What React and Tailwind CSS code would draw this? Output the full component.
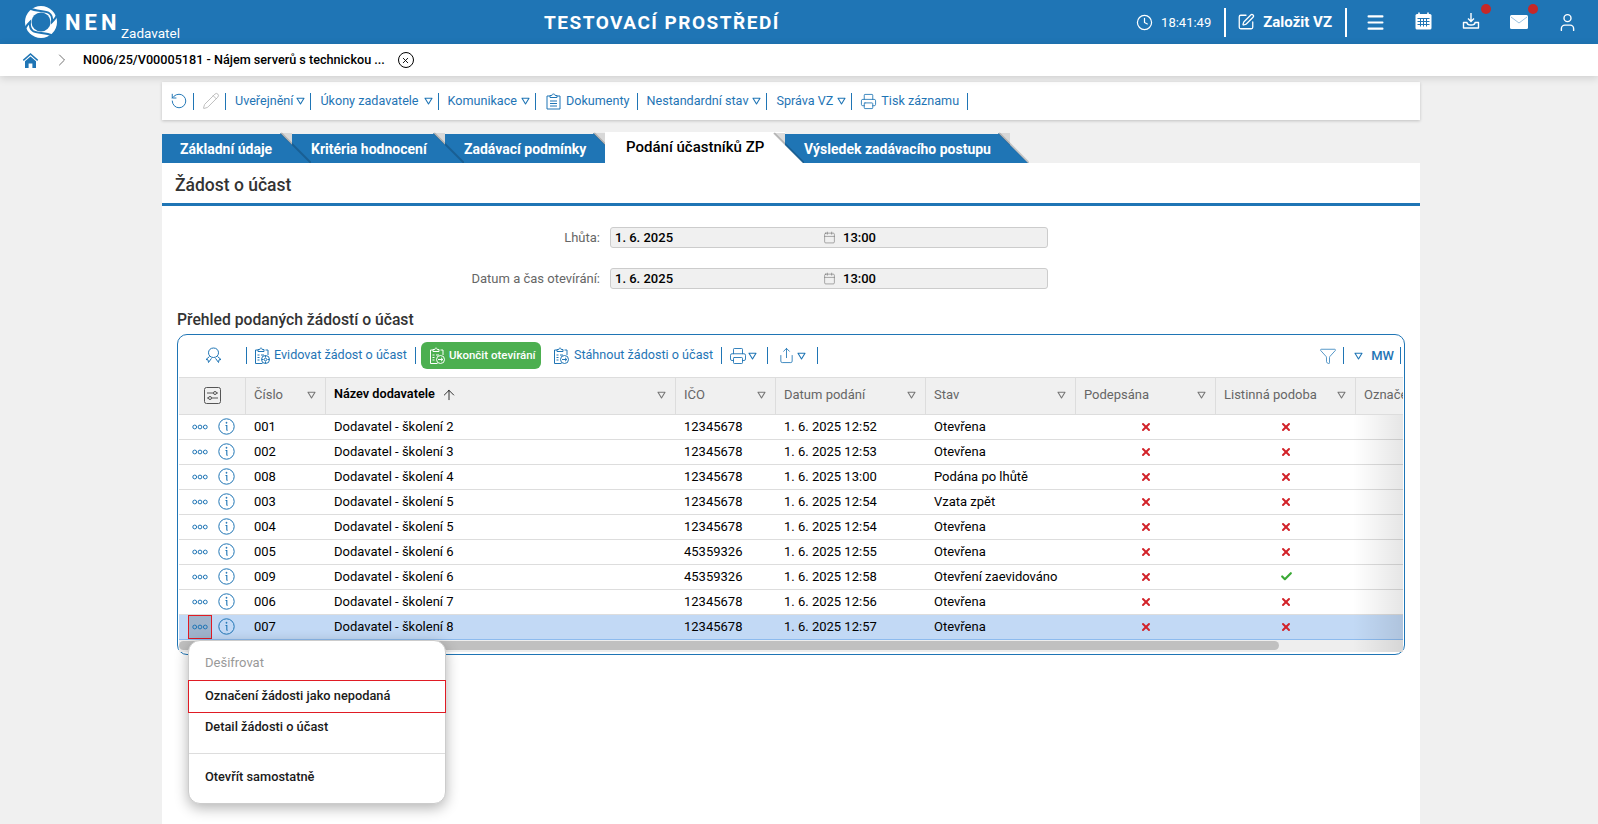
import {
  Clock,
  SquarePen,
  Menu,
  Calendar,
  User,
  ChevronRight,
  RotateCcw,
  Pencil,
  Printer,
  Share,
  Funnel,
  ArrowUp,
  X,
  Check,
} from "lucide-react";

const rows = [
  ["001", "Dodavatel - školení 2", "12345678", "1. 6. 2025 12:52", "Otevřena", false],
  ["002", "Dodavatel - školení 3", "12345678", "1. 6. 2025 12:53", "Otevřena", false],
  ["008", "Dodavatel - školení 4", "12345678", "1. 6. 2025 13:00", "Podána po lhůtě", false],
  ["003", "Dodavatel - školení 5", "12345678", "1. 6. 2025 12:54", "Vzata zpět", false],
  ["004", "Dodavatel - školení 5", "12345678", "1. 6. 2025 12:54", "Otevřena", false],
  ["005", "Dodavatel - školení 6", "45359326", "1. 6. 2025 12:55", "Otevřena", false],
  ["009", "Dodavatel - školení 6", "45359326", "1. 6. 2025 12:58", "Otevření zaevidováno", true],
  ["006", "Dodavatel - školení 7", "12345678", "1. 6. 2025 12:56", "Otevřena", false],
  ["007", "Dodavatel - školení 8", "12345678", "1. 6. 2025 12:57", "Otevřena", false],
];

const tabs = [
  { label: "Základní údaje", box: "w-[130px] pl-[18px] z-[5]" },
  { label: "Kritéria hodnocení", box: "w-[153px] pl-[19px] z-[4]" },
  { label: "Zadávací podmínky", box: "w-[160px] pl-[19px] z-[3]" },
  { label: "Podání účastníků ZP", box: "w-[180px] pl-[21px] z-[6]", active: true },
  { label: "Výsledek zadávacího postupu", box: "w-[225px] pl-[19px] z-[1]" },
];

const gridCols = "grid grid-cols-[67px_80px_350px_100px_150px_150px_140px_140px_60px]";

function Caret({ className = "text-[#1f75b5]" }) {
  return (
    <svg width="9" height="8" viewBox="0 0 9 8" className={`shrink-0 ${className}`}>
      <path d="M1 1.2h7L4.5 7z" fill="none" stroke="currentColor" strokeWidth="1.1" strokeLinejoin="round" />
    </svg>
  );
}

function Sep() {
  return <span className="w-px h-[17px] bg-[#1f75b5] shrink-0" />;
}

function Logo() {
  return (
    <svg width="34" height="34" viewBox="0 0 34 34" className="shrink-0">
      <circle cx="17" cy="17" r="16" fill="#fff" />
      <circle cx="17" cy="17" r="9.5" fill="#1f75b5" />
      <path d="M6 3.5C12 6.5 21 5.500 25 8c3 2 3.500 5 3 9 3-3 5-5 5-8" fill="none" stroke="#1f75b5" strokeWidth="2" />
      <path d="M28 30.500C22 27.500 13 28.500 9 26c-3-2-3.500-5-3-9-3 3-5 5-5 8" fill="none" stroke="#1f75b5" strokeWidth="2" />
    </svg>
  );
}

function HomeIcon() {
  return (
    <svg width="17" height="17" viewBox="0 0 17 17">
      <path d="M8.500 1L0.800 7.800l1 1.100 6.700-5.900 6.700 5.900 1-1.100z" fill="#1f75b5" />
      <path d="M3 9.300l5.500-4.800 5.500 4.800V16h-3.600v-4.500H6.600V16H3z" fill="#1f75b5" />
    </svg>
  );
}

function CalendarIcon() {
  return (
    <svg width="17" height="18" viewBox="0 0 17 18">
      <rect x="0.500" y="2" width="16" height="15.500" rx="1.500" fill="#fff" />
      <path d="M4 0.500v3M13 0.500v3" stroke="#fff" strokeWidth="1.600" />
      <path d="M2.500 6.500h12M2.500 9.500h12M2.500 12.500h12M5.500 6.500v8M8.500 6.500v8M11.500 6.500v8" stroke="#1f75b5" strokeWidth="1" />
    </svg>
  );
}

function InboxIcon() {
  return (
    <svg width="18" height="18" viewBox="0 0 18 18" fill="none" stroke="#fff" strokeWidth="1.400">
      <path d="M9 1v8M6 6.500L9 9.500l3-3" />
      <path d="M1.500 10.500H5c0 1.500 1.500 2.500 4 2.500s4-1 4-2.500h3.500v5.500h-15z" strokeLinejoin="round" />
    </svg>
  );
}

function MailFilled() {
  return (
    <svg width="18" height="14" viewBox="0 0 18 14">
      <rect width="18" height="14" rx="1.500" fill="#fff" />
      <path d="M1 2l8 6 8-6" fill="none" stroke="#9cc3e0" strokeWidth="1" />
    </svg>
  );
}

function ClipIcon({ badge, stroke = "#1f75b5", badgeFill = "#fff" }) {
  return (
    <svg width="18" height="18" viewBox="0 0 18 18" fill="none" stroke={stroke} strokeWidth="1" className="shrink-0">
      <path d="M5 3H2.500v13.500h7M12.500 3H15v5" />
      <path d="M5 4.500V2.500h1.800c.2-1 .6-1.500 1.200-1.500s1 .5 1.200 1.500H11v2z" />
      <path d="M4.500 8h2M4.500 10.500h2M4.500 13h2M8 8h3" />
      <circle cx="12.500" cy="12.500" r="4" fill={badgeFill} />
      {badge === "gear" ? (
        <>
          <circle cx="12.500" cy="12.500" r="1.300" />
          <path d="M12.500 8.500v2M12.500 14.500v2M8.500 12.500h2M14.500 12.500h2" />
        </>
      ) : (
        <path d="M10 12.500h4.800M13 10.800l1.800 1.700-1.800 1.700" />
      )}
    </svg>
  );
}

function DocIcon() {
  return (
    <svg width="15" height="17" viewBox="0 0 15 17" fill="none" stroke="#1f75b5" strokeWidth="1" className="shrink-0">
      <path d="M4 3H1v13h13V3h-3" />
      <path d="M4 4.500V2.500h1.800C6 1.400 6.600 1 7.500 1s1.500.4 1.700 1.500H11v2z" />
      <path d="M4 8h7M4 10.500h7M4 13h7" />
    </svg>
  );
}

function AwardIcon() {
  return (
    <svg width="17" height="17" viewBox="0 0 17 17" fill="none" stroke="#1f75b5" strokeWidth="1" className="shrink-0">
      <path d="M8.500 1C5.500 1 3.500 3 3.500 5.800c0 2.600 2 4.700 5 4.700s5-2.100 5-4.700C13.500 3 11.500 1 8.500 1z" />
      <path d="M4.500 9.500L1 12.500l2 .3.500 2.700 3-4.200M12.500 9.500L16 12.500l-2 .3-.500 2.700-3-4.200" />
    </svg>
  );
}

function ColumnsIcon() {
  return (
    <svg width="17" height="17" viewBox="0 0 17 17" fill="none" stroke="#555" strokeWidth="1">
      <rect x="0.500" y="0.500" width="16" height="16" rx="2" />
      <path d="M3 6h6.500M12.500 6H14M3 11h1.500M7.500 11H14" />
      <circle cx="11" cy="6" r="1.500" />
      <circle cx="6" cy="11" r="1.500" />
    </svg>
  );
}

function Dots() {
  return (
    <svg width="16" height="6" viewBox="0 0 16 6" fill="none" stroke="#1f75b5" strokeWidth="1" className="shrink-0">
      <circle cx="2.700" cy="3" r="1.900" />
      <circle cx="8" cy="3" r="1.900" />
      <circle cx="13.300" cy="3" r="1.900" />
    </svg>
  );
}

function InfoIcon() {
  return (
    <svg width="17" height="17" viewBox="0 0 17 17" fill="none" stroke="#1f75b5" className="shrink-0">
      <circle cx="8.500" cy="8.500" r="7.700" strokeWidth="1" />
      <path d="M7.500 7.500h1.300v4.200c0 .5.300.7.900.6" strokeWidth="1.100" />
      <circle cx="8.500" cy="4.800" r=".7" fill="#1f75b5" strokeWidth=".4" />
    </svg>
  );
}

function CrossMark() {
  return <X size={12} strokeWidth={4} className="text-[#d2232a]" />;
}

function TabTail({ active }) {
  return (
    <svg width="31" height="31" viewBox="0 0 31 31" className="absolute right-[-19px] bottom-0">
      <path d="M0 1h12v12z" fill={active ? "#dcdcdc" : "#d8d8d8"} />
      <path d="M0 1l30 30H0z" fill={active ? "#fff" : "#1f75b5"} />
      <path d="M1 1l30 30" stroke="#000" strokeOpacity=".18" strokeWidth="2" />
    </svg>
  );
}

function Field({ label }) {
  return (
    <div className="flex items-center">
      <span className="w-[440px] pr-[10px] text-right text-[13px] text-[#666]">{label}</span>
      <div className="flex items-center w-[438px] h-[21px] bg-[#f0f0f0] border border-[#ccc] rounded-[3px] pl-[4px] text-[13px] font-medium text-black">
        <span className="w-[208px]">1. 6. 2025</span>
        <Calendar size={13} strokeWidth={1} className="text-[#666] mr-[7px]" />
        <span>13:00</span>
      </div>
    </div>
  );
}

function HeadCell({ label, bold, sort }) {
  return (
    <div className="flex items-center justify-between pl-[8px] pr-[9px] pb-[2px] border-r border-[#ddd] whitespace-nowrap overflow-hidden">
      <span className={`flex items-center gap-[6px] ${bold ? "font-semibold text-black text-[12.7px]" : "text-[#666]"}`}>
        {label}
        {sort && <ArrowUp size={16} strokeWidth={1.2} className="text-black" />}
      </span>
      <Caret className="text-[#777]" />
    </div>
  );
}

export default function App() {
  return (
    <div className="w-[1598px] h-screen overflow-hidden bg-[#f0f0f0] font-['Roboto',sans-serif] text-[13px] leading-none">
      <header className="flex items-center h-[44px] bg-[#1f75b5] text-white">
        <div className="ml-[24px]">
          <Logo />
        </div>
        <div className="relative w-[120px] ml-[7px] h-full">
          <span className="absolute left-0 top-[12px] text-[22px] font-bold tracking-[4px]">NEN</span>
          <span className="absolute left-[56px] top-[27px] text-[13.5px] font-normal">Zadavatel</span>
        </div>
        <div className="ml-[359px] text-[19px] font-bold tracking-[1.5px] whitespace-nowrap">TESTOVACÍ PROSTŘEDÍ</div>
        <div className="ml-auto flex items-center pr-[7px]">
          <Clock size={17} strokeWidth={1.7} />
          <span className="ml-[8px] text-[13px]">18:41:49</span>
          <span className="ml-[13px] w-[2px] h-[29px] bg-white" />
          <SquarePen size={18} strokeWidth={1.7} className="ml-[11px]" />
          <span className="ml-[8px] text-[15px] font-bold">Založit VZ</span>
          <span className="ml-[13px] w-[2px] h-[29px] bg-white" />
          <div className="ml-[4px] flex">
            <div className="w-[48px] flex justify-center">
              <Menu size={21} strokeWidth={2.3} />
            </div>
            <div className="w-[48px] flex justify-center">
              <CalendarIcon />
            </div>
            <div className="relative w-[48px] flex justify-center">
              <InboxIcon />
              <span className="absolute top-[-8px] left-[34px] w-[10px] h-[10px] rounded-full bg-[#c62828]" />
            </div>
            <div className="relative w-[48px] flex justify-center items-center pr-[1px]">
              <MailFilled />
              <span className="absolute top-[-8px] left-[33px] w-[10px] h-[10px] rounded-full bg-[#c62828]" />
            </div>
            <div className="w-[48px] flex justify-center">
              <User size={21} strokeWidth={1.6} />
            </div>
          </div>
        </div>
      </header>

      <div className="relative z-10 flex items-center h-[32px] bg-white shadow-[0_2px_8px_rgba(0,0,0,0.15)]">
        <div className="ml-[22px]">
          <HomeIcon />
        </div>
        <ChevronRight size={20} strokeWidth={1} className="ml-[13px] text-[#555]" />
        <span className="ml-[11px] text-[12.65px] font-medium text-black">N006/25/V00005181 - Nájem serverů s technickou ...</span>
        <span className="ml-[13px] flex items-center justify-center w-[16px] h-[16px] rounded-full border-[1.5px] border-black">
          <X size={9} strokeWidth={2.4} className="text-black" />
        </span>
      </div>

      <main className="ml-[162px] w-[1258px]">
        <div className="flex items-center mt-[6px] h-[38px] bg-white shadow-[0_1px_3px_rgba(0,0,0,0.2)] pl-[8px] text-[12.6px] text-[#1f75b5] whitespace-nowrap">
          <RotateCcw size={18} strokeWidth={1.3} />
          <span className="ml-[5px] flex"><Sep /></span>
          <Pencil size={18} strokeWidth={1} className="ml-[8px] text-[#aaa]" />
          <span className="ml-[5px] flex"><Sep /></span>
          <span className="ml-[9px]">Uveřejnění</span>
          <span className="ml-[3px] flex"><Caret /></span>
          <span className="ml-[5px] flex"><Sep /></span>
          <span className="ml-[9px]">Úkony zadavatele</span>
          <span className="ml-[5px] flex"><Caret /></span>
          <span className="ml-[5px] flex"><Sep /></span>
          <span className="ml-[9px]">Komunikace</span>
          <span className="ml-[4px] flex"><Caret /></span>
          <span className="ml-[5px] flex"><Sep /></span>
          <span className="ml-[10px] flex"><DocIcon /></span>
          <span className="ml-[5px]">Dokumenty</span>
          <span className="ml-[7px] flex"><Sep /></span>
          <span className="ml-[9px]">Nestandardní stav</span>
          <span className="ml-[4px] flex"><Caret /></span>
          <span className="ml-[5px] flex"><Sep /></span>
          <span className="ml-[9px]">Správa VZ</span>
          <span className="ml-[4px] flex"><Caret /></span>
          <span className="ml-[5px] flex"><Sep /></span>
          <Printer size={17} strokeWidth={1.2} className="ml-[8px]" />
          <span className="ml-[4px]">Tisk záznamu</span>
          <span className="ml-[8px] flex"><Sep /></span>
        </div>

        <div className="flex items-end h-[30px] mt-[13px]">
          {tabs.map((t) => (
            <div
              key={t.label}
              className={`relative flex items-center shrink-0 whitespace-nowrap ${t.box} ${
                t.active
                  ? "h-[31px] bg-white text-black text-[15px] font-medium"
                  : "h-[29px] bg-[#1f75b5] text-white text-[14px] font-bold"
              }`}
            >
              {t.label}
              <TabTail active={t.active} />
            </div>
          ))}
        </div>

        <section className="bg-white h-[661px] relative">
          <h1 className="flex items-center h-[43px] pl-[13px] pt-[5px] text-[17.5px] font-medium text-[#333] border-b-[3px] border-[#1f75b5]">
            Žádost o účast
          </h1>
          <div className="flex flex-col gap-[20px] pt-[21px] pl-[8px]">
            <Field label="Lhůta:" />
            <Field label="Datum a čas otevírání:" />
          </div>
          <h2 className="mt-[23px] ml-[15px] text-[15.7px] font-medium text-[#333]">Přehled podaných žádostí o účast</h2>

          <div className="relative mt-[6px] ml-[15px] w-[1228px] h-[321px] border-[1.5px] border-[#1f75b5] rounded-[10px]">
            <div className="flex items-center h-[42px] pl-[27px] text-[12.6px] text-[#1f75b5] whitespace-nowrap">
              <AwardIcon />
              <span className="ml-[24px] flex"><Sep /></span>
              <span className="ml-[6px] flex"><ClipIcon badge="gear" /></span>
              <span className="ml-[3px]">Evidovat žádost o účast</span>
              <span className="ml-[8px] flex"><Sep /></span>
              <div className="ml-[5px] flex items-center w-[120px] h-[27px] pl-[7px] gap-[3px] rounded-[6px] bg-[#4caf50] text-white text-[11.5px] font-medium">
                <ClipIcon badge="arrow" stroke="#fff" badgeFill="#4caf50" />
                Ukončit otevírání
              </div>
              <span className="ml-[11px] flex"><ClipIcon badge="arrow" /></span>
              <span className="ml-[4px]">Stáhnout žádosti o účast</span>
              <span className="ml-[8px] flex"><Sep /></span>
              <Printer size={18} strokeWidth={1.2} className="ml-[7px]" />
              <span className="ml-[1px] flex"><Caret /></span>
              <span className="ml-[10px] flex"><Sep /></span>
              <Share size={17} strokeWidth={1.2} className="ml-[10px]" />
              <span className="ml-[2px] flex"><Caret /></span>
              <span className="ml-[11px] flex"><Sep /></span>
              <Funnel size={18} strokeWidth={1} className="ml-auto" />
              <span className="ml-[6px] flex"><Sep /></span>
              <span className="ml-[10px] flex"><Caret /></span>
              <span className="ml-[8px] text-[13px] font-medium">MW</span>
              <span className="ml-[6px] mr-[3px] flex"><Sep /></span>
            </div>

            <div className="relative mx-[1px] w-[1224px] overflow-hidden text-[13px]">
              <div className={`${gridCols} h-[38px] bg-[#f0f0f0] border-y border-[#ddd]`}>
                <div className="flex items-center justify-center border-r border-[#ddd]">
                  <ColumnsIcon />
                </div>
                <HeadCell label="Číslo" />
                <HeadCell label="Název dodavatele" bold sort />
                <HeadCell label="IČO" />
                <HeadCell label="Datum podání" />
                <HeadCell label="Stav" />
                <HeadCell label="Podepsána" />
                <HeadCell label="Listinná podoba" />
                <div className="flex items-center pl-[8px] pb-[2px] text-[#666] whitespace-nowrap">Označení</div>
              </div>
              {rows.map((r, i) => {
                const selected = i === rows.length - 1;
                return (
                  <div
                    key={r[0]}
                    className={`${gridCols} h-[25px] items-center border-b whitespace-nowrap text-black ${
                      selected ? "bg-[#c2d9f5] border-[#8dbbee]" : "bg-white border-[#ddd]"
                    }`}
                  >
                    <div className="flex items-center h-full pl-[9px] gap-[6px]">
                      <span
                        className={`flex items-center justify-center w-[24px] h-full ${
                          selected ? "bg-[#9fb4cc] border border-[#e01b24]" : ""
                        }`}
                      >
                        <Dots />
                      </span>
                      <InfoIcon />
                    </div>
                    <div className="pl-[8px]">{r[0]}</div>
                    <div className="pl-[8px]">{r[1]}</div>
                    <div className="pl-[8px]">{r[2]}</div>
                    <div className="pl-[8px]">{r[3]}</div>
                    <div className="pl-[8px]">{r[4]}</div>
                    <div className="flex justify-center"><CrossMark /></div>
                    <div className="flex justify-center">
                      {r[5] ? <Check size={13} strokeWidth={4} className="text-[#3aa935]" /> : <CrossMark />}
                    </div>
                    <div />
                  </div>
                );
              })}
              <div className="absolute right-0 top-[38px] bottom-0 w-[50px] bg-gradient-to-r from-transparent to-black/10" />
              <div className="h-[12px] bg-[#eee] pt-[1px]">
                <div className="w-[1100px] h-[9px] rounded-full bg-[#c0c0c0]" />
              </div>
            </div>

            <div className="absolute left-[10px] top-[305px] z-20 w-[258px] h-[164px] bg-white border border-[#ccc] rounded-[12px] shadow-[0_4px_14px_rgba(0,0,0,0.3)] text-[12.8px] font-medium text-[#1a1a1a]">
              <div className="flex items-center h-[39px] pt-[4px] pl-[16px] text-[13px] text-[#999] font-normal">Dešifrovat</div>
              <div className="flex items-center h-[33px] -mx-[1px] pl-[16px] border border-[#e01b24]">Označení žádosti jako nepodaná</div>
              <div className="flex items-center h-[29px] pl-[16px]">Detail žádosti o účast</div>
              <div className="mt-[11px] border-t border-[#ddd]" />
              <div className="flex items-center h-[47px] pl-[16px]">Otevřít samostatně</div>
            </div>
          </div>
        </section>
      </main>
    </div>
  );
}
